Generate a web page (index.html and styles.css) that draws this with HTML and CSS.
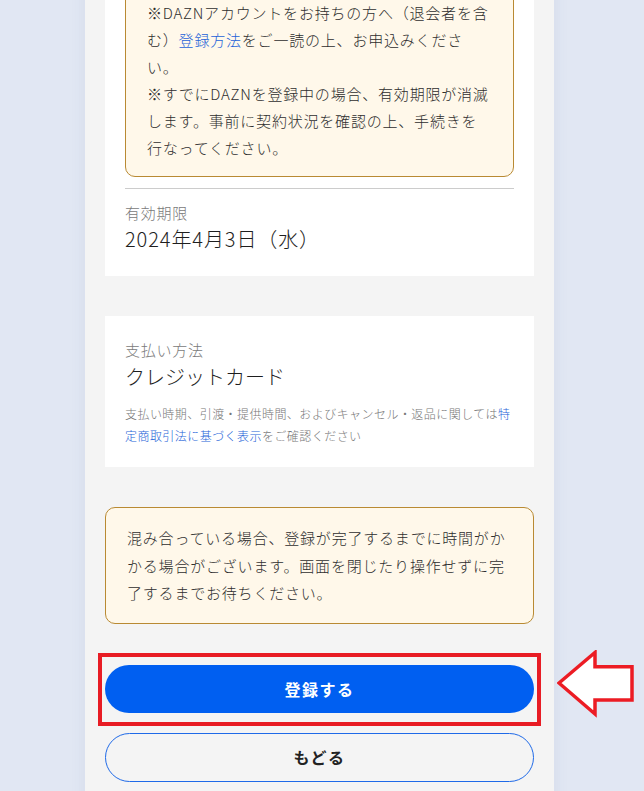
FILE: index.html
```html
<!DOCTYPE html>
<html lang="ja">
<head>
<meta charset="utf-8">
<title>登録内容の確認</title>
<link rel="stylesheet" href="styles.css">
</head>
<body>
<main class="page">
  <section class="card card-top">
    <div class="caution">
      <p>※DAZNアカウントをお持ちの方へ（退会者を含む）<a class="link" href="#">登録方法</a>をご一読の上、お申込みください。</p>
      <p>※すでにDAZNを登録中の場合、有効期限が消滅します。事前に契約状況を確認の上、手続きを行なってください。</p>
    </div>
    <hr class="divider">
    <div class="field">
      <div class="field-label">有効期限</div>
      <div class="field-value field-date">2024年4月3日（水）</div>
    </div>
  </section>

  <section class="card card-pay">
    <div class="field-label">支払い方法</div>
    <div class="field-value">クレジットカード</div>
    <p class="note">支払い時期、引渡・提供時間、およびキャンセル・返品に関しては<a class="link" href="#">特定商取引法に基づく表示</a>をご確認ください</p>
  </section>

  <div class="notice">混み合っている場合、登録が完了するまでに時間がかかる場合がございます。画面を閉じたり操作せずに完了するまでお待ちください。</div>

  <div class="actions">
    <div class="primary-wrap">
      <button class="btn btn-primary" type="button">登録する</button>
      <span class="highlight"></span>
      <svg class="pointer" width="80" height="70" viewBox="0 0 80 70" aria-hidden="true">
        <polygon points="2,33 38,2.5 38,16.7 75,16.7 75,50 38,50 38,64" fill="#ffffff" stroke="#ec1c24" stroke-width="3.5" stroke-linejoin="miter"/>
      </svg>
    </div>
    <button class="btn btn-secondary" type="button">もどる</button>
  </div>
</main>
</body>
</html>
```

FILE: styles.css
```css
* { box-sizing: border-box; }

html, body {
  margin: 0;
  padding: 0;
}

body {
  background: #e1e7f3;
  font-family: "Noto Sans CJK JP", "Noto Sans", sans-serif;
  font-weight: 300;
  color: #333333;
  overflow: hidden;
}

.page {
  width: 469px;
  margin: -38px 0 0 85px;
  background: #f4f4f4;
  padding: 0 20px 60px;
  box-shadow: 0 0 14px rgba(120, 135, 170, 0.12);
}

.card {
  background: #ffffff;
  padding: 0 20px;
}

.card-top {
  padding-top: 20px;
  padding-bottom: 22px;
}

.caution {
  background: #fff8ea;
  border: 1px solid #b98a33;
  border-radius: 10px;
  padding: 16px 23px 15px 21px;
  font-size: 15px;
  line-height: 27px;
  letter-spacing: 0.8px;
  color: #2e2e2e;
}

.caution p {
  margin: 0;
}

.link {
  color: #1d63d8;
  text-decoration: none;
}

.divider {
  border: 0;
  border-top: 1px solid #cccccc;
  margin: 11px 0 0;
  height: 0;
}

.field {
  padding-top: 13px;
}

.field-label {
  font-size: 15px;
  line-height: 22px;
  letter-spacing: 0.75px;
  color: #7a7a7a;
}

.field-value {
  font-size: 20px;
  line-height: 30px;
  color: #1e1e1e;
}

.field-date {
  letter-spacing: 0.9px;
}

.card-pay {
  margin-top: 40px;
  padding-top: 23px;
  padding-bottom: 20px;
}

.card-pay .field-value {
  line-height: 32px;
}

.note {
  margin: 10px 0 0;
  font-size: 12px;
  line-height: 22px;
  letter-spacing: 0.45px;
  color: #777777;
}

.notice {
  margin-top: 40px;
  background: #fff8ea;
  border: 1px solid #b98a33;
  border-radius: 10px;
  padding: 16px 21px;
  font-size: 15px;
  line-height: 27.5px;
  letter-spacing: 0.8px;
  color: #2e2e2e;
}

.actions {
  margin-top: 41px;
  display: flex;
  flex-direction: column;
  gap: 20px;
}

.primary-wrap {
  position: relative;
}

.btn {
  display: block;
  width: 100%;
  border-radius: 999px;
  font-family: "Noto Sans CJK JP", "Noto Sans", sans-serif;
  font-weight: 700;
  font-size: 16px;
  letter-spacing: 1.5px;
  cursor: pointer;
}

.btn-primary {
  height: 48px;
  border: 0;
  background: #005ff1;
  color: #ffffff;
}

.btn-secondary {
  height: 49px;
  border: 1px solid #1f6ae8;
  background: transparent;
  color: #222222;
}

.highlight {
  position: absolute;
  left: -7px;
  right: -7px;
  top: -12px;
  bottom: -13px;
  border: 4px solid #e81c24;
  pointer-events: none;
}

.pointer {
  position: absolute;
  left: 452px;
  top: -15px;
}
```
